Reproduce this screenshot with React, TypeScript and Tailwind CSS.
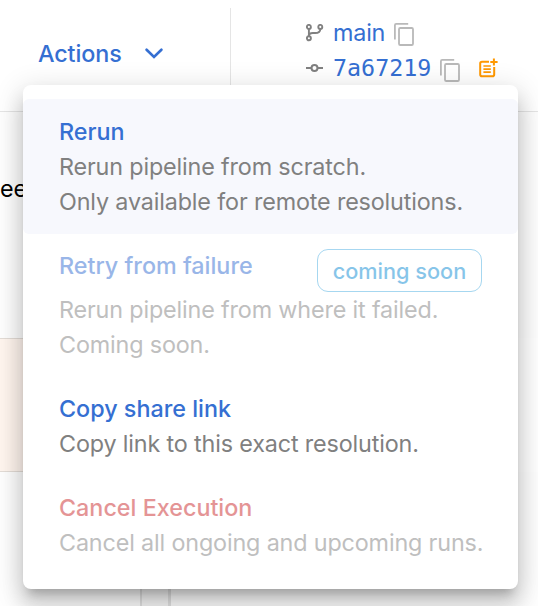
import type { ReactNode } from "react";

function CopyIcon() {
  return (
    <svg className="block h-[23px] w-[20px]" viewBox="0 0 20 23" fill="none" stroke="#b9b9b9" strokeWidth="1.8">
      <path d="M0.9 16.5V2.2Q0.9 0.9 2.2 0.9H14.2" />
      <rect x="5" y="5" width="14" height="17" rx="1.3" />
    </svg>
  );
}

function BranchIcon() {
  return (
    <svg className="block h-[18px] w-[18px]" viewBox="0 0 18 18" fill="none" stroke="#808080" strokeWidth="1.9">
      <circle cx="2.9" cy="2.9" r="2" />
      <circle cx="2.9" cy="14.3" r="2" />
      <circle cx="14.3" cy="2.9" r="2" />
      <path d="M2.9 4.9V12.3M14.3 4.9C14.3 8.6 12 9 9.2 9H6.8C4.8 9 2.9 10 2.9 12.2" />
    </svg>
  );
}

function CommitIcon() {
  return (
    <svg className="block h-[10px] w-[18px]" viewBox="0 0 18 10" fill="none" stroke="#808080" strokeWidth="2">
      <circle cx="8.5" cy="5" r="3" />
      <path d="M0 5H5.4M11.6 5H17" />
    </svg>
  );
}

function NoteAddIcon() {
  return (
    <svg className="block h-[20px] w-[19px]" viewBox="0 0 19 20" fill="none" stroke="#ff9800" strokeWidth="2">
      <path d="M10 3.8H3Q1.2 3.8 1.2 5.6V16.4Q1.2 18.2 3 18.2H13.4Q15.2 18.2 15.2 16.4V9" />
      <path d="M4.4 8H11.8M4.4 11.1H11.8M4.4 14.2H11.8" strokeWidth="1.7" />
      <path d="M14.9 0.4V7.6M11.3 4H18.6" />
    </svg>
  );
}

type ItemProps = {
  title: string;
  tone?: "blue" | "red";
  active?: boolean;
  disabled?: boolean;
  badge?: string;
  children: ReactNode;
};

function MenuItem({ title, tone = "blue", active, disabled, badge, children }: ItemProps) {
  return (
    <div
      className={`rounded-[6px] pt-[15px] pl-[36px] pr-[30px] ${active ? "bg-[#f7f8fd] pb-[15px]" : "pb-[14px]"} ${disabled ? "opacity-50" : ""}`}
    >
      <div className="flex items-start justify-between pr-[6px]">
        <span className={`font-medium ${badge ? "-mt-px" : ""} ${tone === "red" ? "text-[#cb2b2e]" : "text-[#356fd2]"}`}>{title}</span>
        {badge && (
          <span className="flex h-[43px] w-[165px] items-center justify-center rounded-[11px] border border-[#4fb0e3] pt-[2px] text-[21.7px] font-medium text-[#0f8dd5]">
            {badge}
          </span>
        )}
      </div>
      <div className="tracking-[-0.145px] whitespace-nowrap text-[#808080]">{children}</div>
    </div>
  );
}

export default function App() {
  return (
    <div className="relative h-[606px] w-[538px] overflow-hidden bg-white font-['Inter',sans-serif] text-[23.33px] leading-[35px]">
      <header className="flex h-[112px] border-b border-[#e5e5e5] pt-[8px]">
        <div className="flex w-[231px] items-start border-r border-[#e5e5e5] pt-[28px] pl-[38px]">
          <span className="font-medium tracking-[-0.1px] text-[#356fd2]">Actions</span>
          <svg className="mt-[12px] ml-[23px] h-[11px] w-[18px]" viewBox="0 0 18 11" fill="none" stroke="#356fd2" strokeWidth="2.6" strokeLinecap="round">
            <path d="M1.6 1.7L9 9L16.4 1.7" />
          </svg>
        </div>
        <div className="flex flex-col pt-[7px] pl-[75px]">
          <div className="flex h-[35px] items-center">
            <BranchIcon />
            <span className="ml-[9px] tracking-[-0.2px] text-[#356fd2]">main</span>
            <span className="mt-[4px] ml-[9px]"><CopyIcon /></span>
          </div>
          <div className="flex h-[35px] items-center">
            <CommitIcon />
            <span className="mt-[2px] ml-[9px] font-['DejaVu_Sans_Mono',monospace] text-[#356fd2]">7a67219</span>
            <span className="mt-[5px] ml-[9px]"><CopyIcon /></span>
            <span className="ml-[19px]"><NoteAddIcon /></span>
          </div>
        </div>
      </header>
      <main className="flex flex-col">
        <div className="h-[226px] bg-[#fefefe] pt-[59px] text-black">ee</div>
        <div className="mr-[30px] h-[134px] border-y border-[#e3dcd6] bg-[#fff5ee]" />
        <div className="flex h-[134px] bg-[#fefefe]">
          <div className="w-[142px] border-r-2 border-[#e2e2e2]" />
          <div className="w-[29px] border-r-[3px] border-[#e2e2e2] bg-[#f8f8f8]" />
        </div>
      </main>
      <div className="absolute top-[85px] left-[23px] h-[504px] w-[495px] rounded-[8px] bg-white pt-[14px] shadow-[0_10px_10px_-6px_rgba(0,0,0,0.2),0_16px_20px_2px_rgba(0,0,0,0.14),0_6px_28px_4px_rgba(0,0,0,0.12)]">
        <MenuItem title="Rerun" active>
          Rerun pipeline from scratch.
          <br />
          Only available for remote resolutions.
        </MenuItem>
        <MenuItem title="Retry from failure" badge="coming soon" disabled>
          Rerun pipeline from where it failed.
          <br />
          Coming soon.
        </MenuItem>
        <MenuItem title="Copy share link">Copy link to this exact resolution.</MenuItem>
        <MenuItem title="Cancel Execution" tone="red" disabled>
          Cancel all ongoing and upcoming runs.
        </MenuItem>
      </div>
    </div>
  );
}
